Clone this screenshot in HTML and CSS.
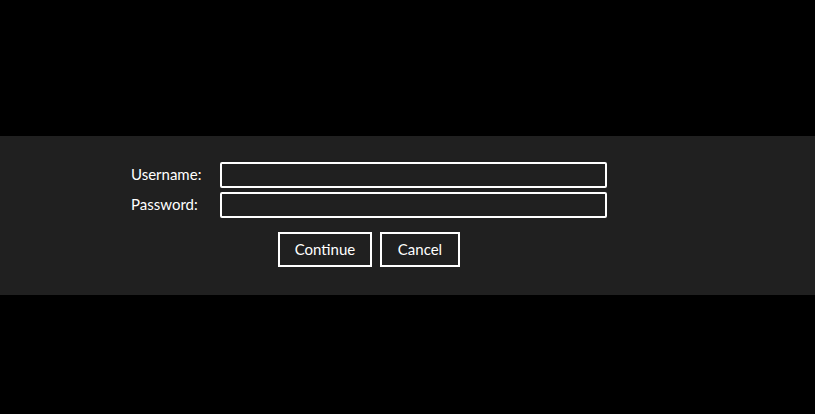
FILE: index.html
```html
<!DOCTYPE html>
<html>
<head>
<meta charset="utf-8">
<link rel="stylesheet" href="styles.css">
</head>
<body>
<div class="panel">
  <form class="login">
    <div class="fields">
      <label class="label" for="u">Username:</label>
      <input class="input" id="u" type="text">
      <label class="label" for="p">Password:</label>
      <input class="input" id="p" type="password">
    </div>
    <div class="actions">
      <button type="button" class="btn btn-continue">Continue</button>
      <button type="button" class="btn btn-cancel">Cancel</button>
    </div>
  </form>
</div>
</body>
</html>
```

FILE: styles.css
```css
html, body {
  margin: 0;
  padding: 0;
  background: #000;
  height: 100%;
}
body {
  font-family: Lato, "Liberation Sans", sans-serif;
  color: #fff;
}
.panel {
  margin-top: 136px;
  height: 159px;
  background: #202020;
  box-sizing: border-box;
  padding: 26px 0 0 131px;
}
.login {
  width: 476px;
}
.fields {
  display: grid;
  grid-template-columns: 89px 387px;
  grid-auto-rows: 26px;
  row-gap: 4px;
  align-items: center;
}
.label {
  font-size: 15px;
  line-height: 18px;
  padding-bottom: 2px;
  color: #fff;
}
.input {
  box-sizing: border-box;
  width: 387px;
  height: 26px;
  margin: 0;
  background: #202020;
  border: 2px solid #fff;
  border-radius: 2px;
  color: #fff;
  font-family: inherit;
  font-size: 15px;
  outline: none;
}
.actions {
  display: flex;
  justify-content: center;
  gap: 8px;
  margin-top: 14px;
}
.btn {
  box-sizing: border-box;
  height: 35px;
  background: #202020;
  border: 2px solid #fff;
  border-radius: 0;
  color: #fff;
  font-family: inherit;
  font-size: 15px;
  padding: 0 0 2px;
  margin: 0;
}
.btn-continue { width: 94px; }
.btn-cancel { width: 80px; }
```
